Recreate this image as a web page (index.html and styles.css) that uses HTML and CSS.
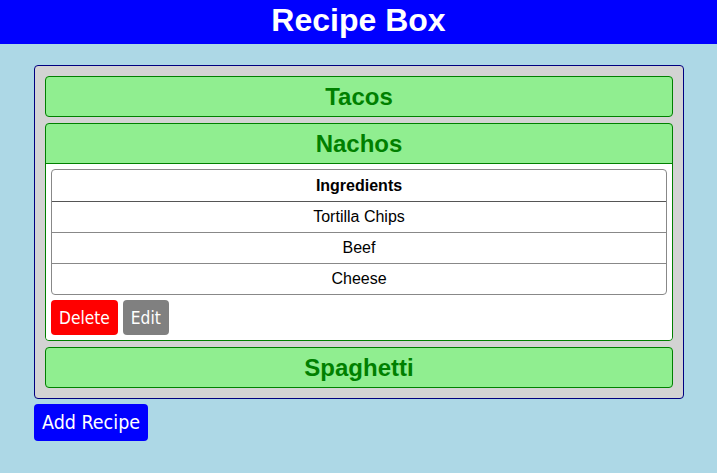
FILE: index.html
```html
<!DOCTYPE html>
<html>
<head>
<meta charset="utf-8">
<title>Recipe Box</title>
<link rel="stylesheet" href="styles.css">
</head>
<body>
<header class="topbar"><h1 class="title">Recipe Box</h1></header>
<main class="box">
  <section class="recipe">
    <h3 class="recipe-head">Tacos</h3>
  </section>
  <section class="recipe open">
    <h3 class="recipe-head">Nachos</h3>
    <div class="recipe-body">
      <div class="ingredients">
        <div class="row head">Ingredients</div>
        <div class="row">Tortilla Chips</div>
        <div class="row">Beef</div>
        <div class="row last">Cheese</div>
      </div>
      <div class="actions">
        <button class="btn btn-delete">Delete</button>
        <button class="btn btn-edit">Edit</button>
      </div>
    </div>
  </section>
  <section class="recipe">
    <h3 class="recipe-head">Spaghetti</h3>
  </section>
</main>
<div class="footer"><button class="btn btn-add">Add Recipe</button></div>
</body>
</html>
```

FILE: styles.css
```css
html, body {
  margin: 0;
  padding: 0;
}
body {
  background: #add8e6;
  font-family: "Liberation Sans", Arial, sans-serif;
  width: 717px;
  height: 473px;
  overflow: hidden;
}
.topbar {
  background: #0000ff;
  height: 44px;
}
.title {
  margin: 0;
  color: #fff;
  font-size: 32px;
  font-weight: bold;
  line-height: 40px;
  text-align: center;
}
.box {
  margin: 21px 33px 0 34px;
  background: #d3d3d3;
  border: 1px solid #000080;
  border-radius: 4px;
  padding: 10px;
  display: flex;
  flex-direction: column;
  gap: 6px;
}
.recipe {
  border: 1px solid #008000;
  border-radius: 4px;
  background: #90ee90;
  overflow: hidden;
}
.recipe-head {
  margin: 0;
  height: 39px;
  line-height: 39px;
  color: #008000;
  font-size: 24px;
  font-weight: bold;
  text-align: center;
}
.open .recipe-head {
  border-bottom: 1px solid #008000;
}
.recipe-body {
  background: #fff;
  padding: 5px;
}
.ingredients {
  border: 1px solid #888;
  border-radius: 4px;
  overflow: hidden;
}
.row {
  height: 30px;
  line-height: 30px;
  text-align: center;
  font-size: 16px;
  color: #000;
  border-bottom: 1px solid #888;
}
.row.head {
  height: 31px;
  line-height: 31px;
  font-weight: bold;
  border-bottom-color: #555;
}
.row.last {
  border-bottom: 0;
}
.actions {
  display: flex;
  gap: 5px;
  margin-top: 5px;
}
.btn {
  border: 0;
  border-radius: 4px;
  color: #fff;
  font-family: "DejaVu Sans Condensed", "DejaVu Sans", sans-serif;
  font-size: 17.2px;
  height: 35px;
  padding: 0 8px;
}
.btn-delete { background: #ff0000; }
.btn-edit { background: #808080; }
.footer {
  padding: 5px 0 0 34px;
}
.btn-add {
  background: #0000ff;
  font-size: 19.5px;
  height: 37px;
}
```
